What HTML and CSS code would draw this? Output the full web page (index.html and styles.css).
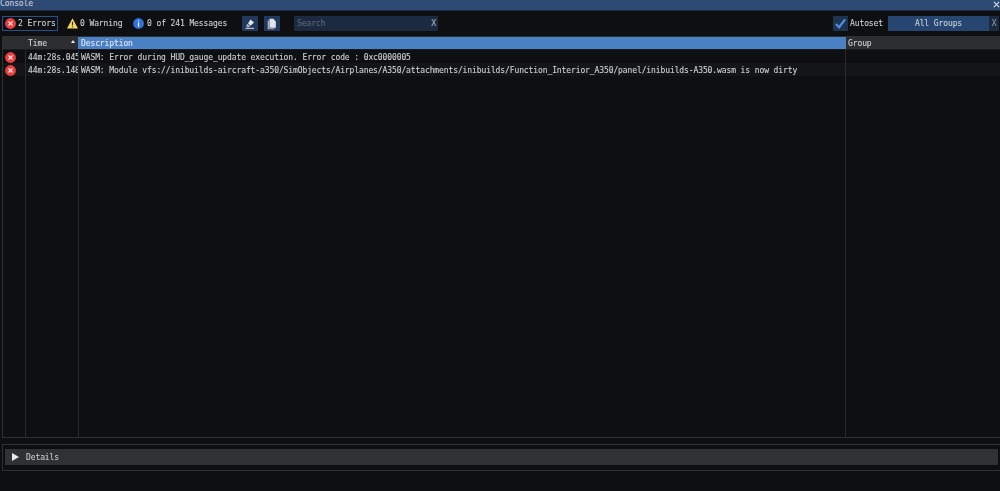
FILE: index.html
```html
<!DOCTYPE html>
<html lang="en">
<head>
<meta charset="utf-8">
<title>Console</title>
<link rel="stylesheet" href="styles.css">
</head>
<body>
<div class="app">
  <header class="titlebar">
    <span class="title">Console</span>
    <svg class="close" viewBox="0 0 8 8"><path d="M1 1L7 7M7 1L1 7"/></svg>
  </header>
  <div class="toolbar">
    <div class="filter filter-active">
      <svg class="ico" viewBox="0 0 12 12"><circle cx="6" cy="6" r="5.900" fill="#e8403f"/><path d="M3.800 3.800L8.200 8.200M8.200 3.800L3.800 8.200" stroke="#f6dcdc" stroke-width="1.300"/></svg>
      <span>2 Errors</span>
    </div>
    <div class="filter filter-warn">
      <svg class="ico" viewBox="0 0 12 12"><path d="M6 .2L12 11.500H0Z" fill="#f3d65f"/><path d="M6 4V8M6 9V10.200" stroke="#222" stroke-width="1.200"/></svg>
      <span>0 Warning</span>
    </div>
    <div class="filter filter-info">
      <svg class="ico" viewBox="0 0 12 12"><circle cx="6" cy="6" r="5.900" fill="#2f72dd"/><path d="M6 2.400V3.800M6 5V9.600" stroke="#fff" stroke-width="1.300"/></svg>
      <span>0 of 241 Messages</span>
    </div>
    <button class="tool tool-clear">
      <svg viewBox="0 0 12 12"><path d="M6.500 1.500L10 4.500L6.500 7.800L4 5.200Z" fill="#e4e8ee"/><path d="M3.600 5.800L6 8.200L5 9.200H3L2.200 7.600Z" fill="#aab4c2"/><path d="M1.500 10.300H10" stroke="#d8dde5"/></svg>
    </button>
    <button class="tool">
      <svg viewBox="0 0 12 14"><path d="M1 3H2.500V12H9V13H1Z" fill="#aab4c2"/><path d="M3 1H7.500L10.500 4V11.500H3Z" fill="#dfe4ea"/></svg>
    </button>
    <div class="search">
      <span class="placeholder">Search</span>
      <span class="x">X</span>
    </div>
    <div class="autoset">
      <span class="check"><svg viewBox="0 0 14 14"><path d="M2 7.500L5.500 11L12 2.500" fill="none" stroke="#4c8fdc" stroke-width="2.400"/></svg></span>
      <span class="autoset-label">Autoset</span>
    </div>
    <div class="groups">All Groups</div>
    <div class="groups-x">X</div>
  </div>
  <div class="table">
    <div class="row head">
      <div class="cell c-icon"></div>
      <div class="cell c-time">Time<span class="sort"></span></div>
      <div class="cell c-desc selected">Description</div>
      <div class="cell c-group">Group</div>
    </div>
    <div class="row">
      <div class="cell c-icon"><svg class="ico" viewBox="0 0 12 12"><circle cx="6" cy="6" r="5.900" fill="#e8403f"/><path d="M3.800 3.800L8.200 8.200M8.200 3.800L3.800 8.200" stroke="#f6dcdc" stroke-width="1.300"/></svg></div>
      <div class="cell c-time">44m:28s.045</div>
      <div class="cell c-desc">WASM: Error during HUD_gauge_update execution. Error code : 0xc0000005</div>
      <div class="cell c-group"></div>
    </div>
    <div class="row alt">
      <div class="cell c-icon"><svg class="ico" viewBox="0 0 12 12"><circle cx="6" cy="6" r="5.900" fill="#e8403f"/><path d="M3.800 3.800L8.200 8.200M8.200 3.800L3.800 8.200" stroke="#f6dcdc" stroke-width="1.300"/></svg></div>
      <div class="cell c-time">44m:28s.148</div>
      <div class="cell c-desc">WASM: Module vfs://inibuilds-aircraft-a350/SimObjects/Airplanes/A350/attachments/inibuilds/Function_Interior_A350/panel/inibuilds-A350.wasm is now dirty</div>
      <div class="cell c-group"></div>
    </div>
    <div class="row fill">
      <div class="cell c-icon"></div>
      <div class="cell c-time"></div>
      <div class="cell c-desc"></div>
      <div class="cell c-group"></div>
    </div>
  </div>
  <div class="details">
    <div class="details-bar">
      <svg class="arrow" viewBox="0 0 7 8"><path d="M0 0L7 4L0 8Z"/></svg>
      <span>Details</span>
    </div>
  </div>
</div>
</body>
</html>
```
FILE: styles.css
```css
* { box-sizing: border-box; }
html, body { margin: 0; height: 100%; background: #0d0f10; overflow: hidden; }
body {
  font-family: "DejaVu Sans Mono", monospace;
  font-size: 8px;
  letter-spacing: -0.105px;
  -webkit-text-stroke: 0.1px currentColor;
  line-height: 13px;
  color: #cfd1d3;
}
.app { width: 1000px; height: 491px; display: flex; flex-direction: column; filter: blur(0.35px); }
.titlebar {
  height: 11px; flex: none; background: #2d4a74; border-bottom: 1px solid #1c2b42;
  display: flex; justify-content: space-between; overflow: hidden;
  line-height: 8px; color: #c9cfd8;
}
.close { width: 7px; height: 7px; margin-top: 1px; stroke: #d8dde5; stroke-width: 1.200; fill: none; }
.toolbar { height: 25px; flex: none; display: flex; align-items: center; padding: 0 1px 0 2px; }
.filter { display: flex; align-items: center; gap: 2px; height: 15px; white-space: nowrap; flex: none; }
.filter-active { width: 56px; padding-left: 2px; border: 1px solid #254f8e; }
.filter-warn { width: 55px; margin-left: 9px; }
.filter-info { width: 93px; margin-left: 11px; gap: 3px; }
.ico { width: 11px; height: 11px; flex: none; }
.tool {
  width: 16px; height: 15px; padding: 2px; border: 0; background: #21395c; flex: none; display: flex; justify-content: center;
}
.tool svg { width: 12px; height: 12px; }
.tool-clear { margin-left: 16px; margin-right: 6px; }
.search {
  width: 144px; height: 15px; margin-left: 14px; padding: 0 2px 0 3px; background: #1b2a40;
  display: flex; justify-content: space-between; align-items: center; color: #5e6672;
}
.x { color: #a9adb3; }
.autoset { display: flex; align-items: center; gap: 2px; margin-left: auto; flex: none; }
.check { width: 15px; height: 15px; background: #1e3350; padding: 1px; display: flex; }
.check svg { width: 13px; height: 13px; }
.autoset-label { width: 33px; white-space: nowrap; }
.groups {
  width: 101px; height: 15px; margin-left: 5px; background: #264571; text-align: center;
  line-height: 15px; color: #c9cfd8; flex: none;
}
.groups-x {
  width: 10px; height: 15px; background: #1b2a40; text-align: center; line-height: 15px; color: #8d939b; flex: none;
}
.table {
  height: 402px; flex: none; margin-left: 2px; display: flex; flex-direction: column;
  border-top: 1px solid #2e3034; border-bottom: 1px solid #2e3034; border-left: 1px solid #2e3034;
}
.row { display: flex; height: 13px; flex: none; white-space: nowrap; line-height: 15px; }
.row.head { background: #2d2e31; border-bottom: 1px solid #1b1c1e; line-height: 14px; }
.row.alt { background: #141517; }
.row.fill { flex: 1; }
.cell { padding-left: 2px; overflow: hidden; border-right: 1px solid #282a2d; position: relative; }
.c-icon { width: 23px; flex: none; padding: 1.500px 0 0 2px; }
.c-time { width: 53px; flex: none; }
.c-desc { width: 767px; flex: none; }
.c-group { flex: 1; border-right: 0; }
.selected { background: #4a80c4; color: #dfe6ef; border-right-color: #4a80c4; box-shadow: -1px 0 0 #4a80c4; }
.sort {
  position: absolute; right: 3px; top: 3px; width: 0; height: 0;
  border: 2.500px solid transparent; border-top: 0; border-bottom: 3px solid #e8e8e8;
}
.details {
  height: 27px; flex: none; margin: 6px 0 0 2px; padding: 4px 2px;
  border: 1px solid #2e3034; border-right: 0;
}
.details-bar {
  height: 16px; background: #2f3135; display: flex; align-items: center; padding-left: 7px; gap: 7px; color: #c3c6ca;
}
.arrow { width: 7px; height: 8px; fill: #e8e8e8; flex: none; }
```
